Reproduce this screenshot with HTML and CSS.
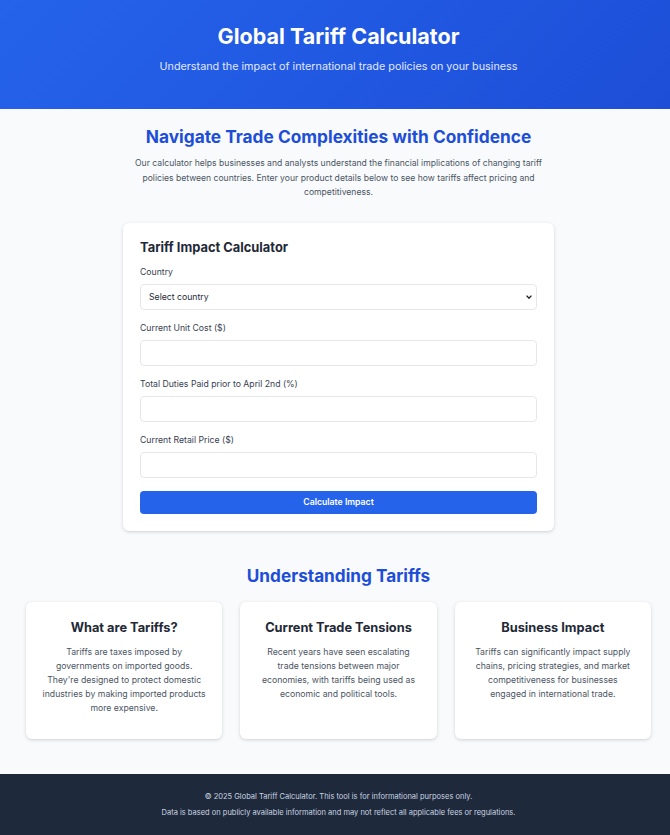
FILE: index.html
```html
<!DOCTYPE html>
<html lang="en">
<head>
<meta charset="utf-8">
<title>Global Tariff Calculator</title>
<link rel="stylesheet" href="styles.css">
</head>
<body>
<header class="hero">
  <div class="inner">
    <h1 class="hero-title">Global Tariff Calculator</h1>
    <p class="hero-sub">Understand the impact of international trade policies on your business</p>
  </div>
</header>
<main class="main">
  <section class="intro inner">
    <h2 class="intro-title">Navigate Trade Complexities with Confidence</h2>
    <p class="intro-text">Our calculator helps businesses and analysts understand the financial implications of changing tariff policies between countries. Enter your product details below to see how tariffs affect pricing and competitiveness.</p>
  </section>
  <section class="calc-wrap inner">
    <form class="calc">
      <h3 class="calc-title">Tariff Impact Calculator</h3>
      <label class="field">
        <span class="label">Country</span>
        <span class="select-wrap">
          <select class="control select">
            <option>Select country</option>
          </select>
          <svg class="chev" width="6" height="4" viewBox="0 0 6 4" aria-hidden="true"><path d="M0.6 0.6 L3 3.2 L5.4 0.6" fill="none" stroke="#222" stroke-width="1.4"/></svg>
        </span>
      </label>
      <label class="field">
        <span class="label">Current Unit Cost ($)</span>
        <input class="control" type="text">
      </label>
      <label class="field">
        <span class="label">Total Duties Paid prior to April 2nd (%)</span>
        <input class="control" type="text">
      </label>
      <label class="field">
        <span class="label">Current Retail Price ($)</span>
        <input class="control" type="text">
      </label>
      <button type="button" class="btn">Calculate Impact</button>
    </form>
  </section>
  <section class="info inner">
    <h2 class="info-title">Understanding Tariffs</h2>
    <div class="cards">
      <div class="card">
        <h3 class="card-title">What are Tariffs?</h3>
        <p class="card-text">Tariffs are taxes imposed by governments on imported goods. They're designed to protect domestic industries by making imported products more expensive.</p>
      </div>
      <div class="card">
        <h3 class="card-title">Current Trade Tensions</h3>
        <p class="card-text">Recent years have seen escalating trade tensions between major economies, with tariffs being used as economic and political tools.</p>
      </div>
      <div class="card">
        <h3 class="card-title">Business Impact</h3>
        <p class="card-text">Tariffs can significantly impact supply chains, pricing strategies, and market competitiveness for businesses engaged in international trade.</p>
      </div>
    </div>
  </section>
</main>
<footer class="footer">
  <div class="inner">
    <p class="foot-line">© 2025 Global Tariff Calculator. This tool is for informational purposes only.</p>
    <p class="foot-line">Data is based on publicly available information and may not reflect all applicable fees or regulations.</p>
  </div>
</footer>
</body>
</html>
```

FILE: styles.css
```css
* { box-sizing: border-box; }
html, body { margin: 0; padding: 0; }
body {
  font-family: Inter, "Noto Sans", "Liberation Sans", sans-serif;
  background: #f8fafc;
  color: #1f2937;
}
.inner { padding-left: 7px; }

.hero {
  background: linear-gradient(135deg, #2563eb 0%, #1d4ed8 100%);
  color: #fff;
  height: 109px;
  padding-top: 22px;
  text-align: center;
}
.hero-title {
  margin: 0;
  font-size: 21.5px;
  line-height: 28px;
  font-weight: 700;
}
.hero-sub {
  margin: 9px 0 0;
  font-size: 10.8px;
  line-height: 16px;
  color: #e0e7ff;
}

.main { padding: 0 0 35px; }

.intro {
  text-align: center;
  padding-top: 16px;
}
.intro-title {
  margin: 0;
  font-size: 17.3px;
  line-height: 24px;
  font-weight: 700;
  color: #1d4ed8;
}
.intro-text {
  margin: 7px auto 0;
  max-width: 414px;
  font-size: 8.6px;
  line-height: 14.5px;
  color: #4b5563;
}

.calc-wrap {
  display: flex;
  justify-content: center;
  margin-top: 23px;
}
.calc {
  width: 431px;
  background: #fff;
  border-radius: 6px;
  box-shadow: 0 1px 4px rgba(0,0,0,0.12), 0 1px 2px rgba(0,0,0,0.06);
  padding: 16px 17px 17px;
  display: flex;
  flex-direction: column;
}
.calc-title {
  margin: 0 0 9px;
  font-size: 12.9px;
  line-height: 18px;
  font-weight: 700;
  color: #1f2937;
}
.field {
  display: flex;
  flex-direction: column;
  margin-bottom: 12px;
}
.label {
  font-size: 8.7px;
  line-height: 12px;
  color: #374151;
  margin-bottom: 6px;
}
.select-wrap {
  position: relative;
  display: flex;
  flex-direction: column;
}
.control {
  height: 26px;
  border: 1px solid #e5e7eb;
  border-radius: 4px;
  background: #fff;
  font-family: inherit;
  font-size: 8.7px;
  color: #1f2937;
  padding: 0 8px;
}
.select {
  appearance: none;
  -webkit-appearance: none;
}
.chev {
  position: absolute;
  right: 5px;
  top: 11px;
  pointer-events: none;
}
.btn {
  margin-top: 1px;
  height: 23px;
  border: none;
  border-radius: 4px;
  background: #2563eb;
  color: #fff;
  font-family: inherit;
  font-size: 8.7px;
  font-weight: 600;
}

.info {
  text-align: center;
  margin-top: 33px;
}
.info-title {
  margin: 0;
  font-size: 17.2px;
  line-height: 24px;
  font-weight: 700;
  color: #1d4ed8;
}
.cards {
  display: grid;
  grid-template-columns: repeat(3, 1fr);
  gap: 18px;
  margin: 14px 19px 0 19px;
}
.card {
  background: #fff;
  border-radius: 6px;
  box-shadow: 0 1px 4px rgba(0,0,0,0.12), 0 1px 2px rgba(0,0,0,0.06);
  height: 137px;
  padding: 17px 16px;
}
.card-title {
  margin: 0;
  font-size: 12.8px;
  line-height: 18px;
  font-weight: 700;
  color: #1f2937;
}
.card-text {
  margin: 8px 0 0;
  font-size: 8.7px;
  line-height: 14px;
  color: #4b5563;
}

.footer {
  background: #1e293b;
  color: #cbd5e1;
  height: 61px;
  padding-top: 17px;
  text-align: center;
}
.foot-line {
  margin: 0 0 5px;
  font-size: 7.5px;
  line-height: 11px;
}
```
